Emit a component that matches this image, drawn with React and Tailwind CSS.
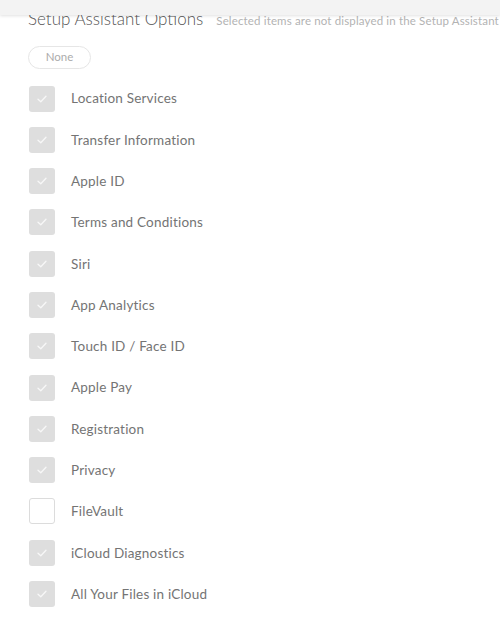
import React from "react";

const items = [
  ["Location Services", true],
  ["Transfer Information", true],
  ["Apple ID", true],
  ["Terms and Conditions", true],
  ["Siri", true],
  ["App Analytics", true],
  ["Touch ID / Face ID", true],
  ["Apple Pay", true],
  ["Registration", true],
  ["Privacy", true],
  ["FileVault", false],
  ["iCloud Diagnostics", true],
  ["All Your Files in iCloud", true],
];

function Check({ checked }) {
  if (!checked) {
    return <div className="w-[26px] h-[26px] rounded-[3px] border border-[#dcdcdc] bg-white shrink-0" />;
  }
  return (
    <div className="w-[26px] h-[26px] rounded-[3px] bg-[#dedede] shrink-0 flex items-center justify-center">
      <svg width="10" height="8" viewBox="0 0 10 8" fill="none">
        <path d="M1 4.2 L3.8 6.8 L9 1.2" stroke="#f7f7f7" strokeWidth="1.3" strokeLinecap="round" strokeLinejoin="round" />
      </svg>
    </div>
  );
}

export default function App() {
  return (
    <div className="relative w-[500px] h-[627px] bg-white overflow-hidden" style={{ fontFamily: "Lato, 'Open Sans', sans-serif" }}>
      <div className="absolute top-0 left-0 right-0 h-[15px] bg-[#f3f3f3] shadow-[0_1px_3px_rgba(0,0,0,0.12)] z-10" />
      <div className="pl-[28px] pt-[6px]">
        <div className="flex items-baseline whitespace-nowrap">
          <span className="text-[17px] font-light text-[#555]">Setup Assistant Options</span>
          <span className="ml-[13px] text-[11.5px] text-[#b3b3b3] tracking-[0.15px]">Selected items are not displayed in the Setup Assistant</span>
        </div>
        <div className="mt-[14px] w-[63px] h-[23px] rounded-full border border-[#e6e6e6] flex items-center justify-center text-[11.5px] text-[#acacac]">None</div>
        <div className="mt-[17px] flex flex-col gap-[15.3px] pl-[1px]">
          {items.map(([label, c]) => (
            <div key={label} className="flex items-center gap-[16px] h-[26px]">
              <Check checked={c} />
              <span className="text-[13.5px] text-[#747474] tracking-[0.2px]">{label}</span>
            </div>
          ))}
        </div>
      </div>
    </div>
  );
}
